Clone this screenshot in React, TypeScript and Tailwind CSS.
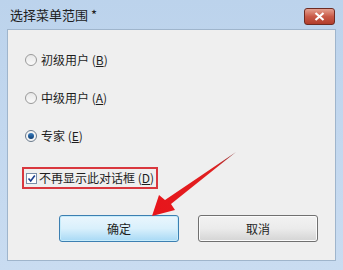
export default function App() {
  return (
    <div className="relative w-[343px] h-[270px] overflow-hidden bg-gradient-to-b from-[#bcd3ec] to-[#c9dcf1] font-['Noto_Sans_CJK_SC',sans-serif] text-[#1e1e1e]">
      {/* Title bar */}
      <div className="flex h-[29px] items-center justify-between pl-[10px] pr-[8px]">
        <span className="text-[13px] text-[#202020]">选择菜单范围 *</span>
        <div className="mt-[4px] flex h-[17px] w-[31px] items-center justify-center rounded-[3px] border border-[#6e2b22] bg-gradient-to-b from-[#e4a090] via-[#c95a48] to-[#b23d2b]">
          <svg width="11" height="9" viewBox="0 0 11 9">
            <path d="M1.5 1 L9.5 8 M9.5 1 L1.5 8" stroke="#fff" strokeWidth="2.2" />
          </svg>
        </div>
      </div>

      {/* Client area */}
      <div className="mx-[7px] h-[232px] border border-[#9fb5cc] bg-[#efefef] px-[16px] pt-[21px]">
        <div className="flex flex-col gap-[20px] text-[12px]">
          <label className="flex items-center gap-[4px] pl-[1px]">
            <span className="h-[12px] w-[12px] rounded-full border border-[#9a9a9a] bg-gradient-to-b from-[#e8e8e8] to-[#fafafa]" />
            <span>初级用户 (<u>B</u>)</span>
          </label>
          <label className="flex items-center gap-[4px] pl-[1px]">
            <span className="h-[12px] w-[12px] rounded-full border border-[#9a9a9a] bg-gradient-to-b from-[#e8e8e8] to-[#fafafa]" />
            <span>中级用户 (<u>A</u>)</span>
          </label>
          <label className="flex items-center gap-[4px] pl-[1px]">
            <span className="flex h-[12px] w-[12px] items-center justify-center rounded-full border border-[#6a7a8c] bg-[#f4f4f4]">
              <span className="h-[6px] w-[6px] rounded-full bg-gradient-to-b from-[#3a7dbf] to-[#0d3f75]" />
            </span>
            <span>专家 (<u>E</u>)</span>
          </label>
        </div>

        <div className="ml-[-2px] mt-[22px] inline-flex h-[22px] items-center gap-[2px] border-2 border-[#d9373e] pl-[2px] pr-[2px] text-[12px]">
          <span className="flex h-[11px] w-[11px] items-center justify-center border border-[#7a8ea8] bg-white">
            <svg width="9" height="9" viewBox="0 0 9 9">
              <path d="M1.5 4.5 L3.7 7 L7.8 1.5" stroke="#1c3f8f" strokeWidth="1.6" fill="none" />
            </svg>
          </span>
          <span>不再显示此对话框 (<u>D</u>)</span>
        </div>

        <div className="mt-[26px] flex gap-[19px] pl-[35px] text-[12px]">
          <div className="flex h-[27px] w-[120px] items-center justify-center rounded-[3px] border border-[#3c7fb1] bg-gradient-to-b from-[#eaf6fd] via-[#d9f0fc] to-[#a7d9f5] shadow-[inset_0_0_0_1px_#c7ecfb]">
            确定
          </div>
          <div className="flex h-[27px] w-[120px] items-center justify-center rounded-[3px] border border-[#707070] bg-gradient-to-b from-[#f2f2f2] via-[#ebebeb] to-[#d4d4d4] shadow-[inset_0_0_0_1px_#fbfbfb]">
            取消
          </div>
        </div>
      </div>

      {/* Red arrow annotation */}
      <svg className="absolute left-0 top-0" width="343" height="270" viewBox="0 0 343 270">
        <defs>
          <linearGradient id="ar" x1="236" y1="152" x2="150" y2="215" gradientUnits="userSpaceOnUse">
            <stop offset="0" stopColor="#8a3a3a" />
            <stop offset="0.25" stopColor="#e02020" />
            <stop offset="1" stopColor="#e8141b" />
          </linearGradient>
        </defs>
        <path d="M236 152 L171 204 L175 210 L152 216 L159 195 L165 200 Z" fill="url(#ar)" />
      </svg>
    </div>
  );
}
